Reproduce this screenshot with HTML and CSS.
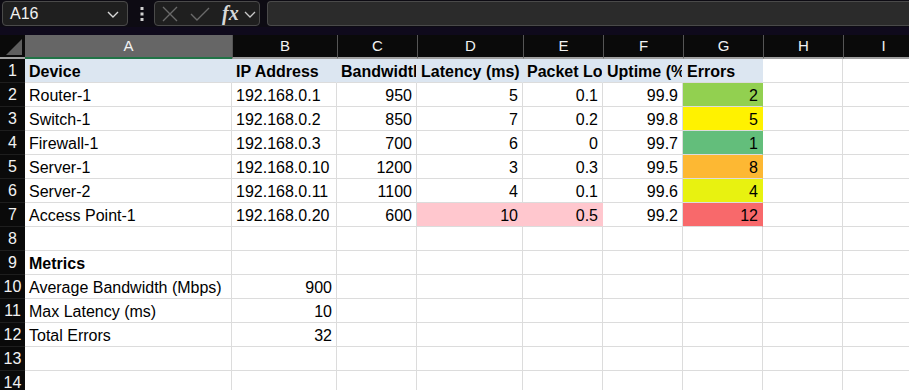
FILE: index.html
```html
<!DOCTYPE html>
<html lang="en">
<head>
    <meta charset="UTF-8">
    <title>Network Devices</title>
    <link rel="stylesheet" href="styles.css">
</head>
<body>
    <div class="topbar">
        <div class="namebox">
            <span>A16</span>
            <svg class="chev" width="14" height="10" viewBox="0 0 14 10"><polyline points="2,3 7,8 12,3" fill="none" stroke="#d8d8d8" stroke-width="1.4"/></svg>
        </div>
        <svg class="dots" width="6" height="16" viewBox="0 0 6 16"><rect x="1.5" y="1" width="3" height="3" fill="#d0d0d0"/><rect x="1.5" y="6.5" width="3" height="3" fill="#d0d0d0"/><rect x="1.5" y="12" width="3" height="3" fill="#d0d0d0"/></svg>
        <div class="fxbox">
            <svg class="ic-x" width="16" height="16" viewBox="0 0 16 16"><path d="M1 1 L15 15 M15 1 L1 15" stroke="#6a6a6a" stroke-width="1.4" fill="none"/></svg>
            <svg class="ic-ok" width="20" height="16" viewBox="0 0 20 16"><polyline points="1,8 7,14 19,2" stroke="#6a6a6a" stroke-width="1.4" fill="none"/></svg>
            <span class="fx">fx</span>
            <svg class="ic-down" width="12" height="8" viewBox="0 0 12 8"><polyline points="1,2 6,7 11,2" fill="none" stroke="#c8c8c8" stroke-width="1.3"/></svg>
        </div>
        <div class="formula"></div>
    </div>
    <div class="strip"></div>

    <div class="sheet" id="sheet"></div>

    <script>
        const cols = ['A', 'B', 'C', 'D', 'E', 'F', 'G', 'H', 'I'];
        // [text, extra class]
        const rows = [
            [['Device'], ['IP Address'], ['Bandwidth (Mbps)'], ['Latency (ms)'], ['Packet Loss (%)'], ['Uptime (%)'], ['Errors']],
            [['Router-1'], ['192.168.0.1'], [950], [5], [0.1], [99.9], [2, 'g2']],
            [['Switch-1'], ['192.168.0.2'], [850], [7], [0.2], [99.8], [5, 'g3']],
            [['Firewall-1'], ['192.168.0.3'], [700], [6], [0], [99.7], [1, 'g4']],
            [['Server-1'], ['192.168.0.10'], [1200], [3], [0.3], [99.5], [8, 'g5']],
            [['Server-2'], ['192.168.0.11'], [1100], [4], [0.1], [99.6], [4, 'g6']],
            [['Access Point-1'], ['192.168.0.20'], [600], [10, 'bad'], [0.5, 'bad'], [99.2], [12, 'g7']],
            [],
            [['Metrics', 'bold']],
            [['Average Bandwidth (Mbps)'], [900]],
            [['Max Latency (ms)'], [10]],
            [['Total Errors'], [32]],
            [],
            []
        ];

        const sheet = document.getElementById('sheet');
        let html = '<div class="corner"><span class="tri"></span></div>';
        cols.forEach(c => {
            html += `<div class="colhead${c === 'A' ? ' sel' : ''}">${c}</div>`;
        });
        rows.forEach((row, r) => {
            html += `<div class="rowhead">${r + 1}</div>`;
            cols.forEach((c, i) => {
                const cell = row[i];
                let cls = 'cell';
                let text = '';
                if (cell) {
                    text = cell[0];
                    if (typeof text === 'number') cls += ' num';
                    if (cell[1]) cls += ' ' + cell[1];
                }
                if (r === 0 && i < 7) cls += ' head';
                html += `<div class="${cls}">${text}</div>`;
            });
        });
        sheet.innerHTML = html;
    </script>
</body>
</html>
```

FILE: styles.css
```css
body {
    margin: 0;
    background-color: #fff;
    font-family: "Liberation Sans", Arial, sans-serif;
    overflow: hidden;
}
.topbar {
    height: 27px;
    background-color: #0d0b13;
    display: flex;
    align-items: flex-start;
    padding-top: 1px;
    box-sizing: border-box;
}
.namebox {
    margin-left: 2px;
    width: 126px;
    height: 25px;
    box-sizing: border-box;
    border: 1px solid #4a4a4a;
    border-radius: 4px;
    background-color: #1f1f1f;
    color: #f0f0f0;
    font-size: 16px;
    display: flex;
    align-items: center;
    justify-content: space-between;
    padding: 0 7px 0 7px;
}
.dots {
    margin: 5px 0 0 11px;
}
.fxbox {
    margin-left: 9px;
    width: 106px;
    height: 25px;
    box-sizing: border-box;
    border: 1px solid #4a4a4a;
    border-radius: 4px;
    background-color: #1f1f1f;
    display: flex;
    align-items: center;
}
.ic-x {
    margin-left: 7px;
}
.ic-ok {
    margin-left: 12px;
}
.fx {
    font-family: "Liberation Serif", serif;
    font-style: italic;
    font-weight: bold;
    font-size: 20px;
    color: #d8d8d8;
    margin-left: 12px;
}
.ic-down {
    margin-left: 5px;
}
.formula {
    margin-left: 7px;
    flex: 1;
    height: 25px;
    box-sizing: border-box;
    border: 1px solid #4a4a4a;
    border-right: none;
    border-radius: 4px 0 0 4px;
    background-color: #2b2b2b;
}
.strip {
    height: 8px;
    background-color: #0f0a1c;
}
.sheet {
    display: grid;
    grid-template-columns: 25px 207px 105px 80px 106px 80px 80px 80px 80px 80px;
    grid-auto-rows: 24px;
}
.corner {
    background-color: #0a0a0a;
    border-bottom: 2px solid #a0a0a0;
    position: relative;
}
.tri {
    position: absolute;
    right: 3px;
    bottom: 2px;
    width: 0;
    height: 0;
    border-left: 16px solid transparent;
    border-bottom: 16px solid #5e5e5e;
}
.colhead {
    background-color: #0a0a0a;
    color: #f2f2f2;
    font-size: 15px;
    text-align: center;
    line-height: 22px;
    border-left: 1px solid #555;
    border-bottom: 2px solid #a0a0a0;
}
.colhead.sel {
    background-color: #666;
    border-bottom-color: #217346;
    border-left: none;
}
.rowhead {
    background-color: #0a0a0a;
    color: #f2f2f2;
    font-size: 16px;
    text-align: center;
    line-height: 23px;
    border-bottom: 1px solid #1e1e1e;
}
.cell {
    font-size: 16px;
    line-height: 18px;
    padding: 4px 4px 0 4px;
    color: #000;
    border-right: 1px solid #dcdcdc;
    border-bottom: 1px solid #dcdcdc;
    white-space: nowrap;
    overflow: hidden;
    min-width: 0;
}
.num {
    text-align: right;
}
.head {
    background-color: #dce6f1;
    font-weight: bold;
    border-right-color: #dce6f1;
    padding-right: 0;
}
.bold {
    font-weight: bold;
}
.bad {
    background-color: #ffc7ce;
    border-right-color: #ffc7ce;
}
.g2 { background-color: #92d050; border-right-color: #92d050; }
.g3 { background-color: #fff200; border-right-color: #fff200; }
.g4 { background-color: #63be7b; border-right-color: #63be7b; }
.g5 { background-color: #fdb833; border-right-color: #fdb833; }
.g6 { background-color: #e8f210; border-right-color: #e8f210; }
.g7 { background-color: #f8696b; border-right-color: #f8696b; }
```
